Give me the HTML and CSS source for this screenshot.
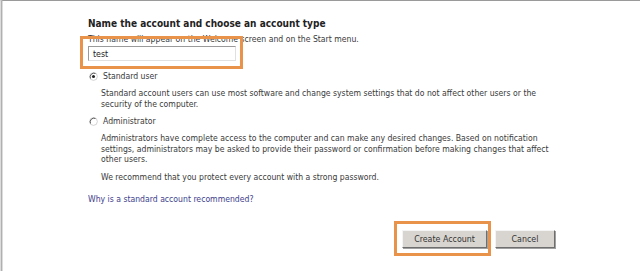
FILE: index.html
```html
<!DOCTYPE html>
<html lang="en">
<head>
  <meta charset="UTF-8">
  <title>Create New Account</title>
  <link rel="stylesheet" href="styles.css">
</head>
<body>

  <div class="window">
    <div class="content">
      <h1 class="title">Name the account and choose an account type</h1>
      <p class="hint">This name will appear on the Welcome screen and on the Start menu.</p>

      <div class="field">
        <input type="text" class="name-input" value="test">
        <span class="mark"></span>
      </div>

      <div class="option first">
        <label class="radio-row">
          <svg class="radio" viewBox="0 0 10 10" width="9" height="9">
            <circle cx="5" cy="5" r="4.3" fill="#fff" stroke="#c8c8c8" stroke-width="0.9"/>
            <path d="M1.6 7.2 A4.3 4.3 0 0 1 7.2 1.6" fill="none" stroke="#555" stroke-width="1.1"/>
            <circle cx="5" cy="5" r="1.7" fill="#222"/>
          </svg>
          Standard user
        </label>
        <p class="desc">Standard account users can use most software and change system settings that do not affect other users or the security of the computer.</p>
      </div>

      <div class="option">
        <label class="radio-row">
          <svg class="radio" viewBox="0 0 10 10" width="9" height="9">
            <circle cx="5" cy="5" r="4.3" fill="#fff" stroke="#c8c8c8" stroke-width="0.9"/>
            <path d="M1.6 7.2 A4.3 4.3 0 0 1 7.2 1.6" fill="none" stroke="#555" stroke-width="1.1"/>
          </svg>
          Administrator
        </label>
        <p class="desc">Administrators have complete access to the computer and can make any desired changes. Based on notification settings, administrators may be asked to provide their password or confirmation before making changes that affect other users.</p>
        <p class="desc note">We recommend that you protect every account with a strong password.</p>
      </div>

      <a class="why-link" href="#">Why is a standard account recommended?</a>

      <div class="actions">
        <div class="field">
          <button class="btn create-btn">Create Account</button>
          <span class="mark mark-btn"></span>
        </div>
        <button class="btn">Cancel</button>
      </div>
    </div>
  </div>

</body>
</html>
```

FILE: styles.css
```css
* {
  margin: 0;
  padding: 0;
  box-sizing: border-box;
}

body {
  font-family: "DejaVu Sans Condensed", "DejaVu Sans", sans-serif;
  font-size: 8.6px;
  color: #3a3a3a;
  background: #fff;
}

.window {
  width: 640px;
  height: 271px;
  border-top: 1px solid #9a9a9a;
  border-left: 3px solid #dcdcdc;
  position: relative;
}

.window::before {
  content: "";
  position: absolute;
  left: -2px;
  top: 0;
  bottom: 0;
  width: 1px;
  background: #b0b0b0;
}

.content {
  padding: 17px 0 0 85px;
  width: 552px;
}

.title {
  font-size: 10px;
  font-weight: bold;
  color: #222;
  line-height: 11px;
}

.hint {
  margin-top: 5px;
  line-height: 11px;
}

.field {
  position: relative;
  display: inline-block;
}

.name-input {
  display: block;
  width: 148px;
  height: 15px;
  margin-top: 1px;
  border: 1px solid #9a9a9a;
  border-right-color: #e0e0e0;
  border-bottom-color: #e0e0e0;
  padding: 0 4px;
  font-family: inherit;
  font-size: 8.8px;
  color: #222;
}

.mark {
  position: absolute;
  top: -9px;
  left: -8px;
  right: -7px;
  bottom: -8px;
  border: 3px solid #e8924a;
  pointer-events: none;
}

.option {
  margin-top: 7px;
}

.option.first {
  margin-top: 10px;
}

.radio-row {
  display: flex;
  align-items: center;
  gap: 5px;
  line-height: 11px;
  padding-left: 1px;
}

.radio {
  display: block;
}

.desc {
  margin-top: 6px;
  padding-left: 13px;
  line-height: 10.5px;
}

.note {
  margin-top: 7px;
}

.why-link {
  display: block;
  margin-top: 12px;
  color: #3e3e8c;
  text-decoration: none;
  line-height: 11px;
}

.actions {
  display: flex;
  justify-content: flex-end;
  gap: 8px;
  margin-top: 25px;
}

.btn {
  height: 18px;
  width: 60px;
  background: #d8d5d0;
  border: 1px solid #f4f4f4;
  border-right-color: #6e6e6e;
  border-bottom-color: #6e6e6e;
  box-shadow: 1px 1px 0 #a0a0a0;
  font-family: inherit;
  font-size: 8.8px;
  color: #333;
}

.create-btn {
  width: 85px;
  display: block;
}

.mark-btn {
  top: -9px;
  left: -8px;
  right: -4px;
  bottom: -8px;
}
```
